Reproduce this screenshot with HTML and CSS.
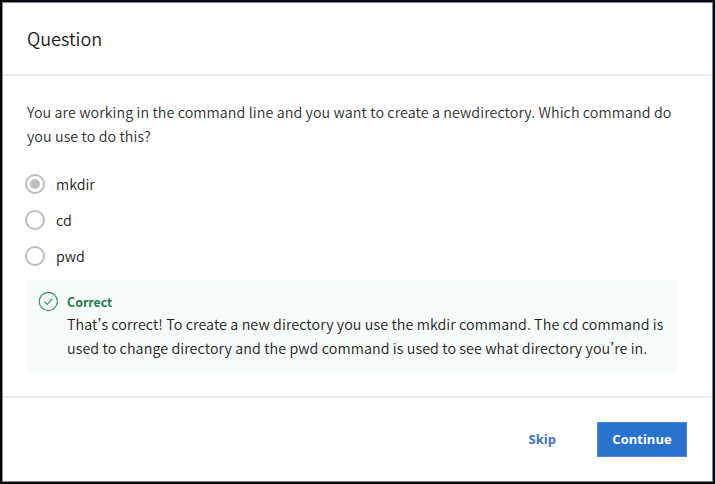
FILE: index.html
```
<!DOCTYPE html>
<html lang="en">
<head>
<meta charset="utf-8">
<title>Question</title>
<link rel="stylesheet" href="styles.css">
</head>
<body>
<main class="modal">
  <header class="header"><h1 class="title">Question</h1></header>
  <section class="body">
    <p class="prompt">You are working in the command line and you want to create a newdirectory. Which command do<br>you use to do this?</p>
    <div class="options">
      <div class="option"><span class="radio checked"></span><span>mkdir</span></div>
      <div class="option"><span class="radio"></span><span>cd</span></div>
      <div class="option"><span class="radio"></span><span>pwd</span></div>
    </div>
    <div class="feedback">
      <svg class="tick" viewBox="0 0 20 20" fill="none" stroke="#2d8b60"><circle cx="10.3" cy="10.5" r="9.1" stroke-width="1.1"/><path d="M6.3 10.7l2.8 2.8 5.3-5.9" stroke-width="1.1"/></svg>
      <div>
        <h2 class="verdict">Correct</h2>
        <p class="explain">That<span class="apostrophe">’</span>s correct! To create a new directory you use the mkdir command. The cd command is<br>used to change directory and the pwd command is used to see what directory you<span class="apostrophe">’</span>re in.</p>
      </div>
    </div>
  </section>
  <footer class="footer">
    <button class="skip">Skip</button>
    <button class="continue">Continue</button>
  </footer>
</main>
</body>
</html>
```
FILE: styles.css
```
* { box-sizing: border-box; }
body {
  margin: 0;
  height: 484px;
  padding: 2px;
  background: #05080d;
  overflow: hidden;
  font-family: "Noto Sans CJK SC", "Noto Sans", sans-serif;
  font-size: 14.3px;
  font-weight: 350;
  line-height: 24px;
  color: #1c1c1c;
}
h1, h2, p { margin: 0; }
.modal {
  display: flex;
  flex-direction: column;
  width: 711px;
  height: 480px;
  background: #fff;
  border: 1px solid #85878a;
}
.header {
  height: 73px;
  padding: 20px 24px 0;
  border-bottom: 2px solid #ededed;
}
.title { font-size: 18px; line-height: 30px; font-weight: 350; }
.body {
  height: 322px;
  padding: 24px 34px 0 23px;
  border-bottom: 2px solid #ededed;
}
.prompt { padding-left: 1px; color: #303030; letter-spacing: 0.08px; white-space: nowrap; }
.options { padding-top: 18px; }
.option {
  display: flex;
  align-items: center;
  gap: 11px;
  height: 36px;
  margin-left: -1px;
}
.radio {
  display: flex;
  width: 20px;
  height: 20px;
  margin-top: -1px;
  padding: 3px;
  border: 2px solid #bdbdbd;
  border-radius: 50%;
}
.checked::before {
  content: "";
  width: 10px;
  height: 10px;
  border-radius: 50%;
  background: #bdbdbd;
}
.feedback {
  display: flex;
  gap: 9px;
  width: 651px;
  height: 92px;
  margin-top: 6px;
  padding: 11px 12px 0;
  background: #f7fbfa;
}
.tick { width: 20px; height: 20px; flex: none; overflow: visible; }
.verdict { height: 21px; font-size: 12.4px; line-height: 22px; font-weight: 700; color: #1f7d54; }
.explain { letter-spacing: 0.085px; white-space: nowrap; }
.apostrophe { font-family: "Liberation Sans", sans-serif; font-size: 17px; line-height: 1; }
.footer {
  display: flex;
  justify-content: flex-end;
  align-items: flex-start;
  padding: 24px 25px 0;
}
.skip, .continue {
  height: 35px;
  padding: 0 0 2px;
  border: 0;
  font: 700 13px/32px "Open Sans", sans-serif;
}
.skip { margin-right: 41px; background: none; color: #3c73c9; }
.continue { width: 90px; padding: 0; background: #2a73cd; color: #fff; border: 1px solid #4a8ad8; line-height: 31px; }
```
